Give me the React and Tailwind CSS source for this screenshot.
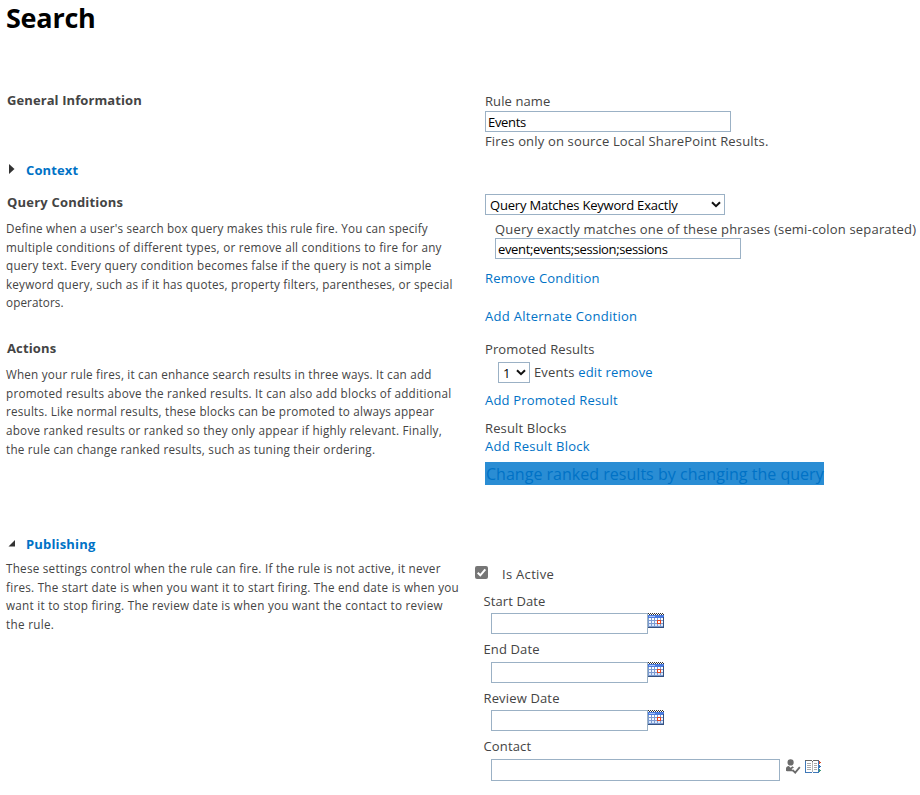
import React from "react";

function Calendar() {
  return (
    <svg width="16" height="16" viewBox="0 0 16 16" shapeRendering="crispEdges" className="shrink-0">
      <rect x="0" y="2" width="16" height="13" fill="#7c9bd0" />
      <path d="M0 .5h16M1 1.5h15" stroke="#333" strokeDasharray="1 1" />
      <rect x="0" y="2" width="16" height="3" fill="#4a7be0" />
      <rect x="1" y="3" width="6" height="1" fill="#a9c4f5" />
      <path fill="#ffffff" d="M1 5h2v2H1zM4 5h2v2H4zM7 5h2v2H7zM10 5h2v2h-2zM13 5h2v2h-2z" />
      <path fill="#f1f6ff" d="M1 8h2v2H1zM4 8h2v2H4zM7 8h2v2H7zM13 8h2v2h-2z" />
      <path fill="#dbe7fb" d="M1 11h2v2H1zM4 11h2v2H4zM7 11h2v2H7zM10 11h2v2h-2zM13 11h2v2h-2z" />
      <rect x="9.5" y="7.5" width="3" height="3" fill="#fff" stroke="#e8431c" />
      <path d="M0 14.5h16M15.5 4v11" stroke="#35517f" />
    </svg>
  );
}

function CheckNames() {
  return (
    <svg width="16" height="16" viewBox="0 0 16 16" className="shrink-0">
      <circle cx="5.6" cy="3.4" r="3.1" fill="#6b6b6b" />
      <path d="M1 11.8V9.6C1 7.9 2.4 7 3.8 7l1.8 1.8L7.4 7.2 9 8.6 6.6 10l1.5 2.2H2z" fill="#6b6b6b" />
      <path d="M7.4 10.8l2.8 2.8 4.6-5.4" fill="none" stroke="#6b6b6b" strokeWidth="1.8" />
    </svg>
  );
}

function AddressBook() {
  return (
    <svg width="16" height="14" viewBox="0 0 16 14" className="shrink-0" shapeRendering="crispEdges">
      <path d="M.5 13V.5h6l1 1 1-1h5" fill="none" stroke="#666" />
      <path d="M.5 1v12M0 12.5h7M8 12.5h6M13.5 1v12" fill="none" stroke="#3f78b8" />
      <path d="M7.5 2v10" stroke="#b5b5b5" />
      <path d="M2 3.5h4M2 5.5h4M2 7.5h4M2 9.5h4M9 3.5h3M9 5.5h3M9 7.5h3M9 9.5h3" stroke="#aaaaaa" />
      <path d="M14 1h1v1h1v1h-1v1h-1z" fill="#d8502c" />
      <path d="M14 5h1v1h1v1h-1v1h-1z" fill="#2f6fb5" />
      <path d="M14 9h1v1h1v1h-1v1h-1z" fill="#3f9a78" />
    </svg>
  );
}

function Chevron() {
  return (
    <svg width="10" height="7" viewBox="0 0 10 7" className="pointer-events-none absolute right-1 top-[7px]">
      <path d="M1 1.2l4 4 4-4" fill="none" stroke="#111" strokeWidth="2" />
    </svg>
  );
}

function Line({ className = "", children }) {
  return <div className={`h-[18px] whitespace-pre text-[13px] leading-[18px] ${className}`}>{children}</div>;
}

function Heading({ className = "", children }) {
  return <h2 className={`h-[18px] whitespace-pre text-[13px] leading-[18px] font-bold ${className}`}>{children}</h2>;
}

function Description({ lines }) {
  return (
    <div className="-ml-px text-[11.7px] leading-[18.6px] whitespace-pre">
      {lines.map(([text, tracking]) => (
        <p key={text} className={tracking}>{text}</p>
      ))}
    </div>
  );
}

function TextBox({ value = "", label, className = "" }) {
  return (
    <input
      aria-label={label}
      defaultValue={value}
      className={`block border border-[#9bb1c5] bg-white px-[2px] text-[13px] text-black outline-none ${className}`}
    />
  );
}

function DateField({ label, className = "" }) {
  return (
    <div className="h-[48.5px]">
      <Line className={className}>{label}</Line>
      <div className="mt-[3px] ml-[7px] flex">
        <TextBox label={label} className="h-[21px] w-[157px]" />
        <Calendar />
      </div>
    </div>
  );
}

const row = "grid grid-cols-[478px_1fr] pl-[7px]";
const link = "text-[#0072c6]";

export default function App() {
  return (
    <main className="h-[795px] w-[920px] overflow-hidden bg-white font-['Open_Sans','Noto_Sans',sans-serif] text-[#444444] [font-variant-ligatures:none]">
      <header className="h-[91px] pl-[6px]">
        <h1 className="text-[27px] leading-[36px] font-bold tracking-[-0.25px] text-black">Search</h1>
      </header>

      <section className={`${row} h-[70px]`}>
        <Heading className="tracking-[0.09px]">General Information</Heading>
        <div className="pt-px">
          <Line className="tracking-[0.1px]">Rule name</Line>
          <TextBox label="Rule name" value="Events" className="mt-px h-[21px] w-[246px] tracking-[-0.3px]" />
          <Line className="tracking-[0.16px]">Fires only on source Local SharePoint Results.</Line>
        </div>
      </section>

      <section className="flex h-[32px] pl-[9px]">
        <svg width="6" height="10" viewBox="0 0 6 10" className="mt-[3px] mr-[11px]">
          <path d="M0 0l5.5 5L0 10z" fill="#333" />
        </svg>
        <Heading className={`tracking-[0.12px] ${link}`}>Context</Heading>
      </section>

      <section className={`${row} h-[146px]`}>
        <div>
          <Heading className="tracking-[0.2px]">Query Conditions</Heading>
          <div className="mt-[8px]">
            <Description
              lines={[
                ["Define when a user's search box query makes this rule fire. You can specify", "tracking-[0.19px]"],
                ["multiple conditions of different types, or remove all conditions to fire for any", "tracking-[0.25px]"],
                ["query text. Every query condition becomes false if the query is not a simple", "tracking-[0.235px]"],
                ["keyword query, such as if it has quotes, property filters, parentheses, or special", "tracking-[0.2px]"],
                ["operators.", "tracking-[0.1px]"],
              ]}
            />
          </div>
        </div>
        <div className="pt-px">
          <div className="relative w-[240px]">
            <select aria-label="Condition" className="block h-[21px] w-[240px] appearance-none border border-[#9bb1c5] bg-white pt-px pl-1 text-[13px] leading-[18px] tracking-[-0.2px] text-black">
              <option>Query Matches Keyword Exactly</option>
            </select>
            <Chevron />
          </div>
          <div className="mt-[5px] pl-[10px]">
            <Line className="tracking-[0.18px]">Query exactly matches one of these phrases (semi-colon separated)</Line>
            <TextBox label="Phrases" value="event;events;session;sessions" className="h-[21px] w-[246px] tracking-[-0.36px]" />
          </div>
          <Line className={`mt-[10px] tracking-[0.22px] ${link}`}>Remove Condition</Line>
          <Line className={`mt-[20px] tracking-[0.29px] ${link}`}>Add Alternate Condition</Line>
        </div>
      </section>

      <section className={`${row} h-[196px]`}>
        <div>
          <Heading className="tracking-[0.15px]">Actions</Heading>
          <div className="mt-[8.3px]">
            <Description
              lines={[
                ["When your rule fires, it can enhance search results in three ways. It can add", "tracking-[0.2px]"],
                ["promoted results above the ranked results. It can also add blocks of additional", "tracking-[0.24px]"],
                ["results. Like normal results, these blocks can be promoted to always appear", "tracking-[0.21px]"],
                ["above ranked results or ranked so they only appear if highly relevant. Finally,", "tracking-[0.24px]"],
                ["the rule can change ranked results, such as tuning their ordering.", "tracking-[0.225px]"],
              ]}
            />
          </div>
        </div>
        <div className="pt-px">
          <Line className="tracking-[0.12px]">Promoted Results</Line>
          <div className="mt-[4px] flex pl-[13px]">
            <div className="relative mr-[4px] w-[32px]">
              <select aria-label="Position" className="block h-[21px] w-[32px] appearance-none border border-[#9bb1c5] bg-white pt-px pl-1 text-[13px] leading-[18px] text-black">
                <option>1</option>
              </select>
              <Chevron />
            </div>
            <Line className="mt-px tracking-[0.15px]">
              Events <a className={link}>edit</a> <a className={link}>remove</a>
            </Line>
          </div>
          <Line className={`mt-[8px] tracking-[0.2px] ${link}`}>Add Promoted Result</Line>
          <Line className="mt-[10px] tracking-[0.15px]">Result Blocks</Line>
          <Line className={`tracking-[0.25px] ${link}`}>Add Result Block</Line>
          <div className="mt-[7px] h-[23px] w-[339px] bg-[#2a8dd4] pl-px text-[16px] leading-[25px] whitespace-pre text-[#0072c6] tracking-[0.02px]">Change ranked results by changing the query</div>
        </div>
      </section>

      <section className="flex h-[25px] pl-[8px]">
        <svg width="7" height="7" viewBox="0 0 7 7" className="mt-[5px] mr-[11px]">
          <path d="M7 0v6.5H.5z" fill="#333" />
        </svg>
        <Heading className={`tracking-[0.17px] ${link}`}>Publishing</Heading>
      </section>

      <section className={row}>
        <div className="-mt-[0.8px]">
          <Description
            lines={[
              ["These settings control when the rule can fire. If the rule is not active, it never", "tracking-[0.24px]"],
              ["fires. The start date is when you want it to start firing. The end date is when you", "tracking-[0.25px]"],
              ["want it to stop firing. The review date is when you want the contact to review", "tracking-[0.26px]"],
              ["the rule.", "tracking-[0.3px]"],
            ]}
          />
        </div>
        <div className="-ml-[1.5px] pt-[5px]">
          <div className="-ml-[8.5px] flex h-[27px]">
            <svg width="13" height="13" viewBox="0 0 13 13" className="mt-px mr-[14px]">
              <rect width="13" height="13" rx="2" fill="#767676" />
              <path d="M2.7 6.7l2.6 2.6 5-6" fill="none" stroke="#fff" strokeWidth="2" />
            </svg>
            <Line className="tracking-[0.3px]">Is Active</Line>
          </div>
          <DateField label="Start Date" className="tracking-[0.1px]" />
          <DateField label="End Date" className="-mt-[0.5px] mb-[3.5px] tracking-[0.12px]" />
          <DateField label="Review Date" className="tracking-[0.15px]" />
          <Line className="tracking-[0.15px]">Contact</Line>
          <div className="mt-[4px] ml-[7.5px] flex">
            <TextBox label="Contact" className="mr-[5px] h-[22px] w-[289px]" />
            <CheckNames />
            <div className="ml-[4px] pt-px">
              <AddressBook />
            </div>
          </div>
        </div>
      </section>
    </main>
  );
}
